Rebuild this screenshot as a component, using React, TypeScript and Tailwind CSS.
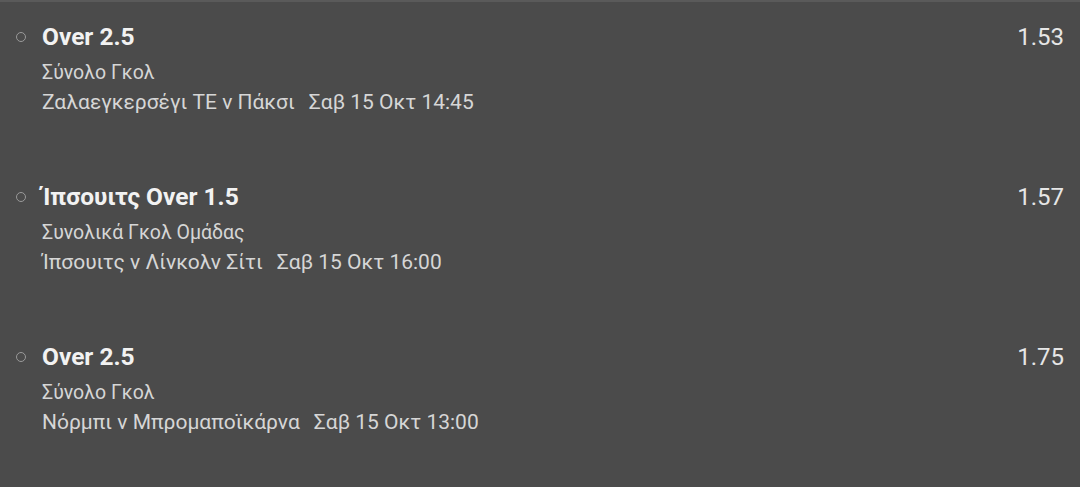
const bets = [
  {
    title: 'Over 2.5',
    market: 'Σύνολο Γκολ',
    match: 'Ζαλαεγκερσέγι ΤΕ ν Πάκσι',
    date: 'Σαβ 15 Οκτ 14:45',
    odds: '1.53',
  },
  {
    title: 'Ίπσουιτς Over 1.5',
    market: 'Συνολικά Γκολ Ομάδας',
    match: 'Ίπσουιτς ν Λίνκολν Σίτι',
    date: 'Σαβ 15 Οκτ 16:00',
    odds: '1.57',
  },
  {
    title: 'Over 2.5',
    market: 'Σύνολο Γκολ',
    match: 'Νόρμπι ν Μπρομαποϊκάρνα',
    date: 'Σαβ 15 Οκτ 13:00',
    odds: '1.75',
  },
]

export default function App() {
  return (
    <div
      className="h-[487px] w-[1080px] overflow-hidden border-t-2 border-[#5a5a5a] bg-[#4b4b4b] text-[#e6e6e6]"
      style={{ fontFamily: 'Roboto, "Noto Sans", sans-serif' }}
    >
      <div className="flex flex-col pt-[20px]">
        {bets.map((b, i) => (
          <div key={i} className="flex h-[160px] items-start pr-[16px]">
            <div className="flex h-[30px] w-[42px] shrink-0 items-center justify-center">
              <span className="block h-[10px] w-[10px] rounded-full border-[1.5px] border-[#9a9a9a]" />
            </div>
            <div className="flex flex-1 flex-col">
              <div className="h-[30px] text-[24.5px] font-bold leading-[30px] text-[#f2f2f2]">
                {b.title}
              </div>
              <div className="mt-[8px] text-[19.5px] leading-[26px] text-[#d6d6d6]">
                {b.market}
              </div>
              <div className="mt-[3px] text-[21px] leading-[26px] text-[#d6d6d6]">
                {b.match}
                <span className="ml-[14px]">{b.date}</span>
              </div>
            </div>
            <div className="h-[30px] text-[24px] leading-[30px] text-[#e6e6e6]">
              {b.odds}
            </div>
          </div>
        ))}
      </div>
    </div>
  )
}
